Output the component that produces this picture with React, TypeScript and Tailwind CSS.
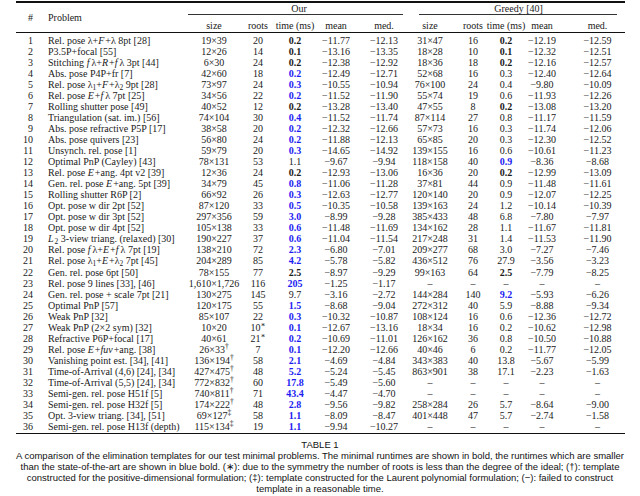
import type React from "react"

type Row = [number, React.ReactNode, string, string, string, number, string, string, string, string, string, number, string, string]

const I = ({ c }: { c: string }) => <i className={c === "f" ? "pr-[2px]" : "pr-[1px]"}>{c}</i>

const rows: Row[] = [
  [1, <>Rel. pose λ+<I c="F" />+λ 8pt [28]</>, "19×39", "20", "0.2", 1, "−11.77", "−12.13", "31×47", "16", "0.2", 1, "−12.19", "−12.59"],
  [2, <>P3.5P+focal [55]</>, "12×26", "14", "0.1", 1, "−13.16", "−13.35", "18×28", "10", "0.1", 1, "−12.32", "−12.51"],
  [3, <>Stitching <I c="f" />λ+<I c="R" />+<I c="f" />λ 3pt [44]</>, "6×30", "24", "0.2", 1, "−12.38", "−12.92", "18×36", "18", "0.2", 1, "−12.16", "−12.57"],
  [4, <>Abs. pose P4P+fr [7]</>, "42×60", "18", "0.2", 2, "−12.49", "−12.71", "52×68", "16", "0.3", 0, "−12.40", "−12.64"],
  [5, <>Rel. pose λ<sub>1</sub>+<I c="F" />+λ<sub>2</sub> 9pt [28]</>, "73×97", "24", "0.3", 2, "−10.55", "−10.94", "76×100", "24", "0.4", 0, "−9.80", "−10.09"],
  [6, <>Rel. pose <I c="E" />+<I c="f" />λ 7pt [25]</>, "34×56", "22", "0.2", 2, "−11.52", "−11.90", "55×74", "19", "0.6", 0, "−11.93", "−12.26"],
  [7, <>Rolling shutter pose [49]</>, "40×52", "12", "0.2", 1, "−13.28", "−13.40", "47×55", "8", "0.2", 1, "−13.08", "−13.20"],
  [8, <>Triangulation (sat. im.) [56]</>, "74×104", "30", "0.4", 2, "−11.52", "−11.74", "87×114", "27", "0.8", 0, "−11.17", "−11.59"],
  [9, <>Abs. pose refractive P5P [17]</>, "38×58", "20", "0.2", 2, "−12.32", "−12.66", "57×73", "16", "0.3", 0, "−11.74", "−12.06"],
  [10, <>Abs. pose quivers [23]</>, "56×80", "24", "0.2", 2, "−11.88", "−12.13", "65×85", "20", "0.3", 0, "−12.30", "−12.52"],
  [11, <>Unsynch. rel. pose [1]</>, "59×79", "20", "0.3", 2, "−14.65", "−14.92", "139×155", "16", "0.6", 0, "−10.61", "−11.23"],
  [12, <>Optimal PnP (Cayley) [43]</>, "78×131", "53", "1.1", 0, "−9.67", "−9.94", "118×158", "40", "0.9", 2, "−8.36", "−8.68"],
  [13, <>Rel. pose <I c="E" />+ang. 4pt v2 [39]</>, "12×36", "24", "0.2", 1, "−12.93", "−13.06", "16×36", "20", "0.2", 1, "−12.99", "−13.09"],
  [14, <>Gen. rel. pose <I c="E" />+ang. 5pt [39]</>, "34×79", "45", "0.8", 2, "−11.06", "−11.28", "37×81", "44", "0.9", 0, "−11.48", "−11.61"],
  [15, <>Rolling shutter R6P [2]</>, "66×92", "26", "0.3", 2, "−12.63", "−12.77", "120×140", "20", "0.9", 0, "−12.07", "−12.25"],
  [16, <>Opt. pose w dir 2pt [52]</>, "87×120", "33", "0.5", 2, "−10.35", "−10.58", "139×163", "24", "1.2", 0, "−10.14", "−10.39"],
  [17, <>Opt. pose w dir 3pt [52]</>, "297×356", "59", "3.0", 2, "−8.99", "−9.28", "385×433", "48", "6.8", 0, "−7.80", "−7.97"],
  [18, <>Opt. pose w dir 4pt [52]</>, "105×138", "33", "0.6", 2, "−11.48", "−11.69", "134×162", "28", "1.1", 0, "−11.67", "−11.81"],
  [19, <><I c="L" /><sub>2</sub> 3-view triang. (relaxed) [30]</>, "190×227", "37", "0.6", 2, "−11.04", "−11.54", "217×248", "31", "1.4", 0, "−11.53", "−11.90"],
  [20, <>Rel. pose <I c="f" />λ+<I c="E" />+<I c="f" />λ 7pt [19]</>, "138×210", "72", "2.3", 2, "−6.80", "−7.01", "209×277", "68", "3.0", 0, "−7.27", "−7.46"],
  [21, <>Rel. pose λ<sub>1</sub>+<I c="E" />+λ<sub>2</sub> 7pt [45]</>, "204×289", "85", "4.2", 2, "−5.78", "−5.82", "436×512", "76", "27.9", 0, "−3.56", "−3.23"],
  [22, <>Gen. rel. pose 6pt [50]</>, "78×155", "77", "2.5", 1, "−8.97", "−9.29", "99×163", "64", "2.5", 1, "−7.79", "−8.25"],
  [23, <>Rel. pose 9 lines [33], [46]</>, "1,610×1,726", "116", "205", 2, "−1.25", "−1.17", "–", "–", "–", 0, "–", "–"],
  [24, <>Gen. rel. pose + scale 7pt [21]</>, "130×275", "145", "9.7", 0, "−3.16", "−2.72", "144×284", "140", "9.2", 2, "−5.93", "−6.26"],
  [25, <>Optimal PnP [57]</>, "120×175", "55", "1.5", 2, "−8.68", "−9.04", "272×312", "40", "5.9", 0, "−8.88", "−9.34"],
  [26, <>Weak PnP [32]</>, "85×107", "22", "0.3", 2, "−10.32", "−10.87", "108×124", "16", "0.6", 0, "−12.36", "−12.72"],
  [27, <>Weak PnP (2×2 sym) [32]</>, "10×20", "10*", "0.1", 2, "−12.67", "−13.16", "18×34", "16", "0.2", 0, "−10.62", "−12.98"],
  [28, <>Refractive P6P+focal [17]</>, "40×61", "21*", "0.2", 2, "−10.69", "−11.01", "126×162", "36", "0.8", 0, "−10.50", "−10.88"],
  [29, <>Rel. pose <I c="E" />+<I c="fuv" />+ang. [38]</>, "26×33†", "7", "0.1", 2, "−12.20", "−12.66", "40×46", "6", "0.2", 0, "−11.77", "−12.05"],
  [30, <>Vanishing point est. [34], [41]</>, "136×194†", "58", "2.1", 2, "−4.69", "−4.84", "343×383", "40", "13.8", 0, "−5.67", "−5.99"],
  [31, <>Time-of-Arrival (4,6) [24], [34]</>, "427×475†", "48", "5.2", 2, "−5.24", "−5.45", "863×901", "38", "17.1", 0, "−2.23", "−1.63"],
  [32, <>Time-of-Arrival (5,5) [24], [34]</>, "772×832†", "60", "17.8", 2, "−5.49", "−5.60", "–", "–", "–", 0, "–", "–"],
  [33, <>Semi-gen. rel. pose H51f [5]</>, "740×811†", "71", "43.4", 2, "−4.47", "−4.70", "–", "–", "–", 0, "–", "–"],
  [34, <>Semi-gen. rel. pose H32f [5]</>, "174×222†", "48", "2.8", 2, "−9.56", "−9.82", "258×284", "26", "5.7", 0, "−8.64", "−9.00"],
  [35, <>Opt. 3-view triang. [34], [51]</>, "69×127‡", "58", "1.1", 2, "−8.09", "−8.47", "401×448", "47", "5.7", 0, "−2.74", "−1.58"],
  [36, <>Semi-gen. rel. pose H13f (depth)</>, "115×134‡", "19", "1.1", 2, "−9.94", "−10.27", "–", "–", "–", 0, "–", "–"],
]

const cols = "grid grid-cols-[24px_146px_56px_32px_42px_40px_56px_36px_50px_16px_56px_55px]"

// trailing *, † or ‡ go up as a superscript
function Mark({ v }: { v: string }) {
  const last = v.slice(-1)
  if (last === "*" || last === "†" || last === "‡") {
    return (
      <span>
        {v.slice(0, -1)}
        <sup>{last === "*" ? "∗" : last}</sup>
      </span>
    )
  }
  return <span>{v}</span>
}

function Time({ v, style }: { v: string; style: number }) {
  if (style === 2) return <span className="font-bold text-[#1c1cf2]">{v}</span>
  if (style === 1) return <span className="font-bold">{v}</span>
  return <span>{v}</span>
}

const cell = "flex items-center justify-center whitespace-nowrap"

export default function App() {
  return (
    <div className="w-[640px] h-[496px] overflow-hidden bg-white text-[#1a1a1a] font-['Liberation_Serif','DejaVu_Serif',serif]">
      <div className="pt-[1px] pl-[16px]">
        <div className="w-[609px] h-[2px] bg-[#111]" />

        {/* header */}
        <div className={`${cols} text-[10px] leading-[10px]`}>
          <div className="row-span-3 flex items-center justify-end pr-[7px]">#</div>
          <div className="row-span-3 flex items-center pl-[8px]">Problem</div>
          <div className={`col-span-5 h-[11px] ${cell}`}>Our</div>
          <div className={`col-span-5 h-[11px] ${cell}`}>Greedy [40]</div>
          <div className="col-span-5 pl-[2px] pr-[9px] h-[6px]">
            <div className="h-[0.8px] bg-[#333]" />
          </div>
          <div className="col-span-5 pl-[7px] pr-[8px] h-[6px]">
            <div className="h-[0.8px] bg-[#333]" />
          </div>
          {["size", "roots", "time (ms)", "mean", "med.", "size", "roots", "time (ms)", "mean", "med."].map((h, i) => (
            <div key={i} className={`h-[12px] ${cell}`}>
              {h}
            </div>
          ))}
        </div>
        <div className="w-[609px] h-[1px] bg-[#111]" />

        {/* body */}
        <div className="pt-[2px] text-[10px] leading-[10px]">
          {rows.map((r) => (
            <div key={r[0]} className={`${cols} h-[11.06px]`}>
              <div className="flex items-center justify-end pr-[7px]">{r[0]}</div>
              <div className="flex items-center pl-[8px] whitespace-nowrap">
                <span>{r[1]}</span>
              </div>
              <div className={cell}>
                <Mark v={r[2]} />
              </div>
              <div className={cell}>
                <Mark v={r[3]} />
              </div>
              <div className={cell}>
                <Time v={r[4]} style={r[5]} />
              </div>
              <div className={cell}>{r[6]}</div>
              <div className={cell}>{r[7]}</div>
              <div className={cell}>{r[8]}</div>
              <div className={cell}>{r[9]}</div>
              <div className={cell}>
                <Time v={r[10]} style={r[11]} />
              </div>
              <div className={cell}>{r[12]}</div>
              <div className={cell}>{r[13]}</div>
            </div>
          ))}
        </div>
        <div className="w-[609px] h-[1.5px] bg-[#111]" />
      </div>

      {/* caption */}
      <div className="mt-[5px] text-center text-[9.5px] leading-[11px] text-[#111] font-['Liberation_Sans','Arial',sans-serif] whitespace-nowrap">
        <div>TABLE 1</div>
        <div>
          A comparison of the elimination templates for our test minimal problems. The minimal runtimes are shown in bold, the runtimes which are smaller
        </div>
        <div>
          than the state-of-the-art are shown in blue bold. (∗): due to the symmetry the number of roots is less than the degree of the ideal; (†): template
        </div>
        <div>
          constructed for the positive-dimensional formulation; (‡): template constructed for the Laurent polynomial formulation; (−): failed to construct
        </div>
        <div>template in a reasonable time.</div>
      </div>
    </div>
  )
}
